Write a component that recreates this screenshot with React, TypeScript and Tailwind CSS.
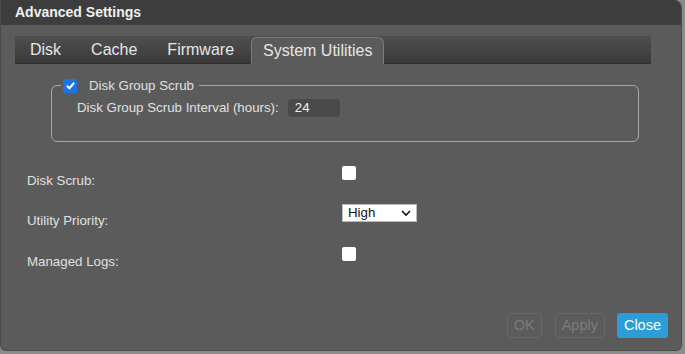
import { useState } from "react";

const tabs = ["Disk", "Cache", "Firmware", "System Utilities"];

export default function App() {
  const [active] = useState("System Utilities");

  return (
    <div
      className="w-[685px] h-[354px] bg-[#8a8a8a] overflow-hidden"
      style={{ fontFamily: '"Liberation Sans", Arial, sans-serif' }}
    >
      <div className="w-[682px] h-[351px] bg-[#5b5b5b] rounded-b-[6px] rounded-tr-[8px] border-l border-b border-r border-[#4a4a4a] flex flex-col overflow-hidden">
        {/* Title bar */}
        <div className="h-[25px] bg-[#3d3d3d] flex items-center pl-[14px] text-[14px] font-bold text-[#f0f0f0]">
          Advanced Settings
        </div>

        {/* Tabs */}
        <div className="mt-[11px] ml-[14px] w-[636px] h-[28px] bg-gradient-to-b from-[#4f4f4f] to-[#3a3a3a] border-b border-[#2e2e2e] flex items-end">
          {tabs.map((t) => (
            <div
              key={t}
              className={
                t === active
                  ? "h-[27px] ml-[2px] px-[11px] bg-[#5b5b5b] border-t border-l border-r border-[#7a7a7a] rounded-t-[6px] text-[16px] text-[#e6e6e6] flex items-center -mb-[1px]"
                  : "h-[27px] px-[15px] text-[16px] text-[#e6e6e6] flex items-center"
              }
            >
              {t}
            </div>
          ))}
        </div>

        {/* Fieldset */}
        <fieldset className="mt-[12px] ml-[50px] w-[588px] h-[66px] border border-[#a8a8a8] rounded-[6px] px-[25px]">
          <legend className="ml-[-16px] px-[2px] flex items-center gap-[12px] text-[13.3px] text-[#e0e0e0]">
            <span className="w-[14px] h-[14px] rounded-[2px] bg-[#1a73e8] flex items-center justify-center">
              <svg width="11" height="11" viewBox="0 0 12 12">
                <path d="M2 6.3 L4.8 9 L10 3" fill="none" stroke="white" strokeWidth="2.2" />
              </svg>
            </span>
            <span className="pr-[3px]">Disk Group Scrub</span>
          </legend>
          <div className="mt-[2px] flex items-center text-[13.3px] text-[#e0e0e0]">
            <span>Disk Group Scrub Interval (hours):</span>
            <div className="ml-[9px] w-[52px] h-[18px] rounded-[4px] bg-[#4a4a4a] flex items-center pl-[7px] text-[#f0f0f0]">
              24
            </div>
          </div>
        </fieldset>

        {/* Options */}
        <div className="mt-[16px] ml-[26px] flex flex-col text-[13.3px] text-[#e0e0e0]">
          <div className="flex items-center h-[40px]">
            <span className="w-[315px] mt-[6px]">Disk Scrub:</span>
            <span className="w-[14px] h-[14px] bg-white rounded-[2px] -mt-[10px]" />
          </div>
          <div className="flex items-center h-[40px]">
            <span className="w-[315px] mt-[6px]">Utility Priority:</span>
            <div className="w-[75px] h-[18px] bg-white border border-[#bbb] flex items-center justify-between pl-[5px] pr-[5px] text-[#111] text-[13.3px] -mt-[10px]">
              <span>High</span>
              <svg width="10" height="8" viewBox="0 0 10 8">
                <path d="M1 2 L5 6 L9 2" fill="none" stroke="#111" strokeWidth="1.6" />
              </svg>
            </div>
          </div>
          <div className="flex items-center h-[41px]">
            <span className="w-[315px] mt-[6px]">Managed Logs:</span>
            <span className="w-[14px] h-[14px] bg-white rounded-[2px] -mt-[10px]" />
          </div>
        </div>

        {/* Buttons */}
        <div className="mt-auto mb-[12px] mr-[13px] flex justify-end items-center text-[14.5px]">
          <button className="h-[25px] px-[6px] border border-[#676767] rounded-[3px] text-[#7c7c7c]">OK</button>
          <button className="ml-[13px] h-[25px] px-[6px] border border-[#676767] rounded-[3px] text-[#7c7c7c]">Apply</button>
          <button className="ml-[12px] h-[25px] px-[7px] bg-[#2b9ed8] rounded-[3px] text-white">Close</button>
        </div>
      </div>
    </div>
  );
}
